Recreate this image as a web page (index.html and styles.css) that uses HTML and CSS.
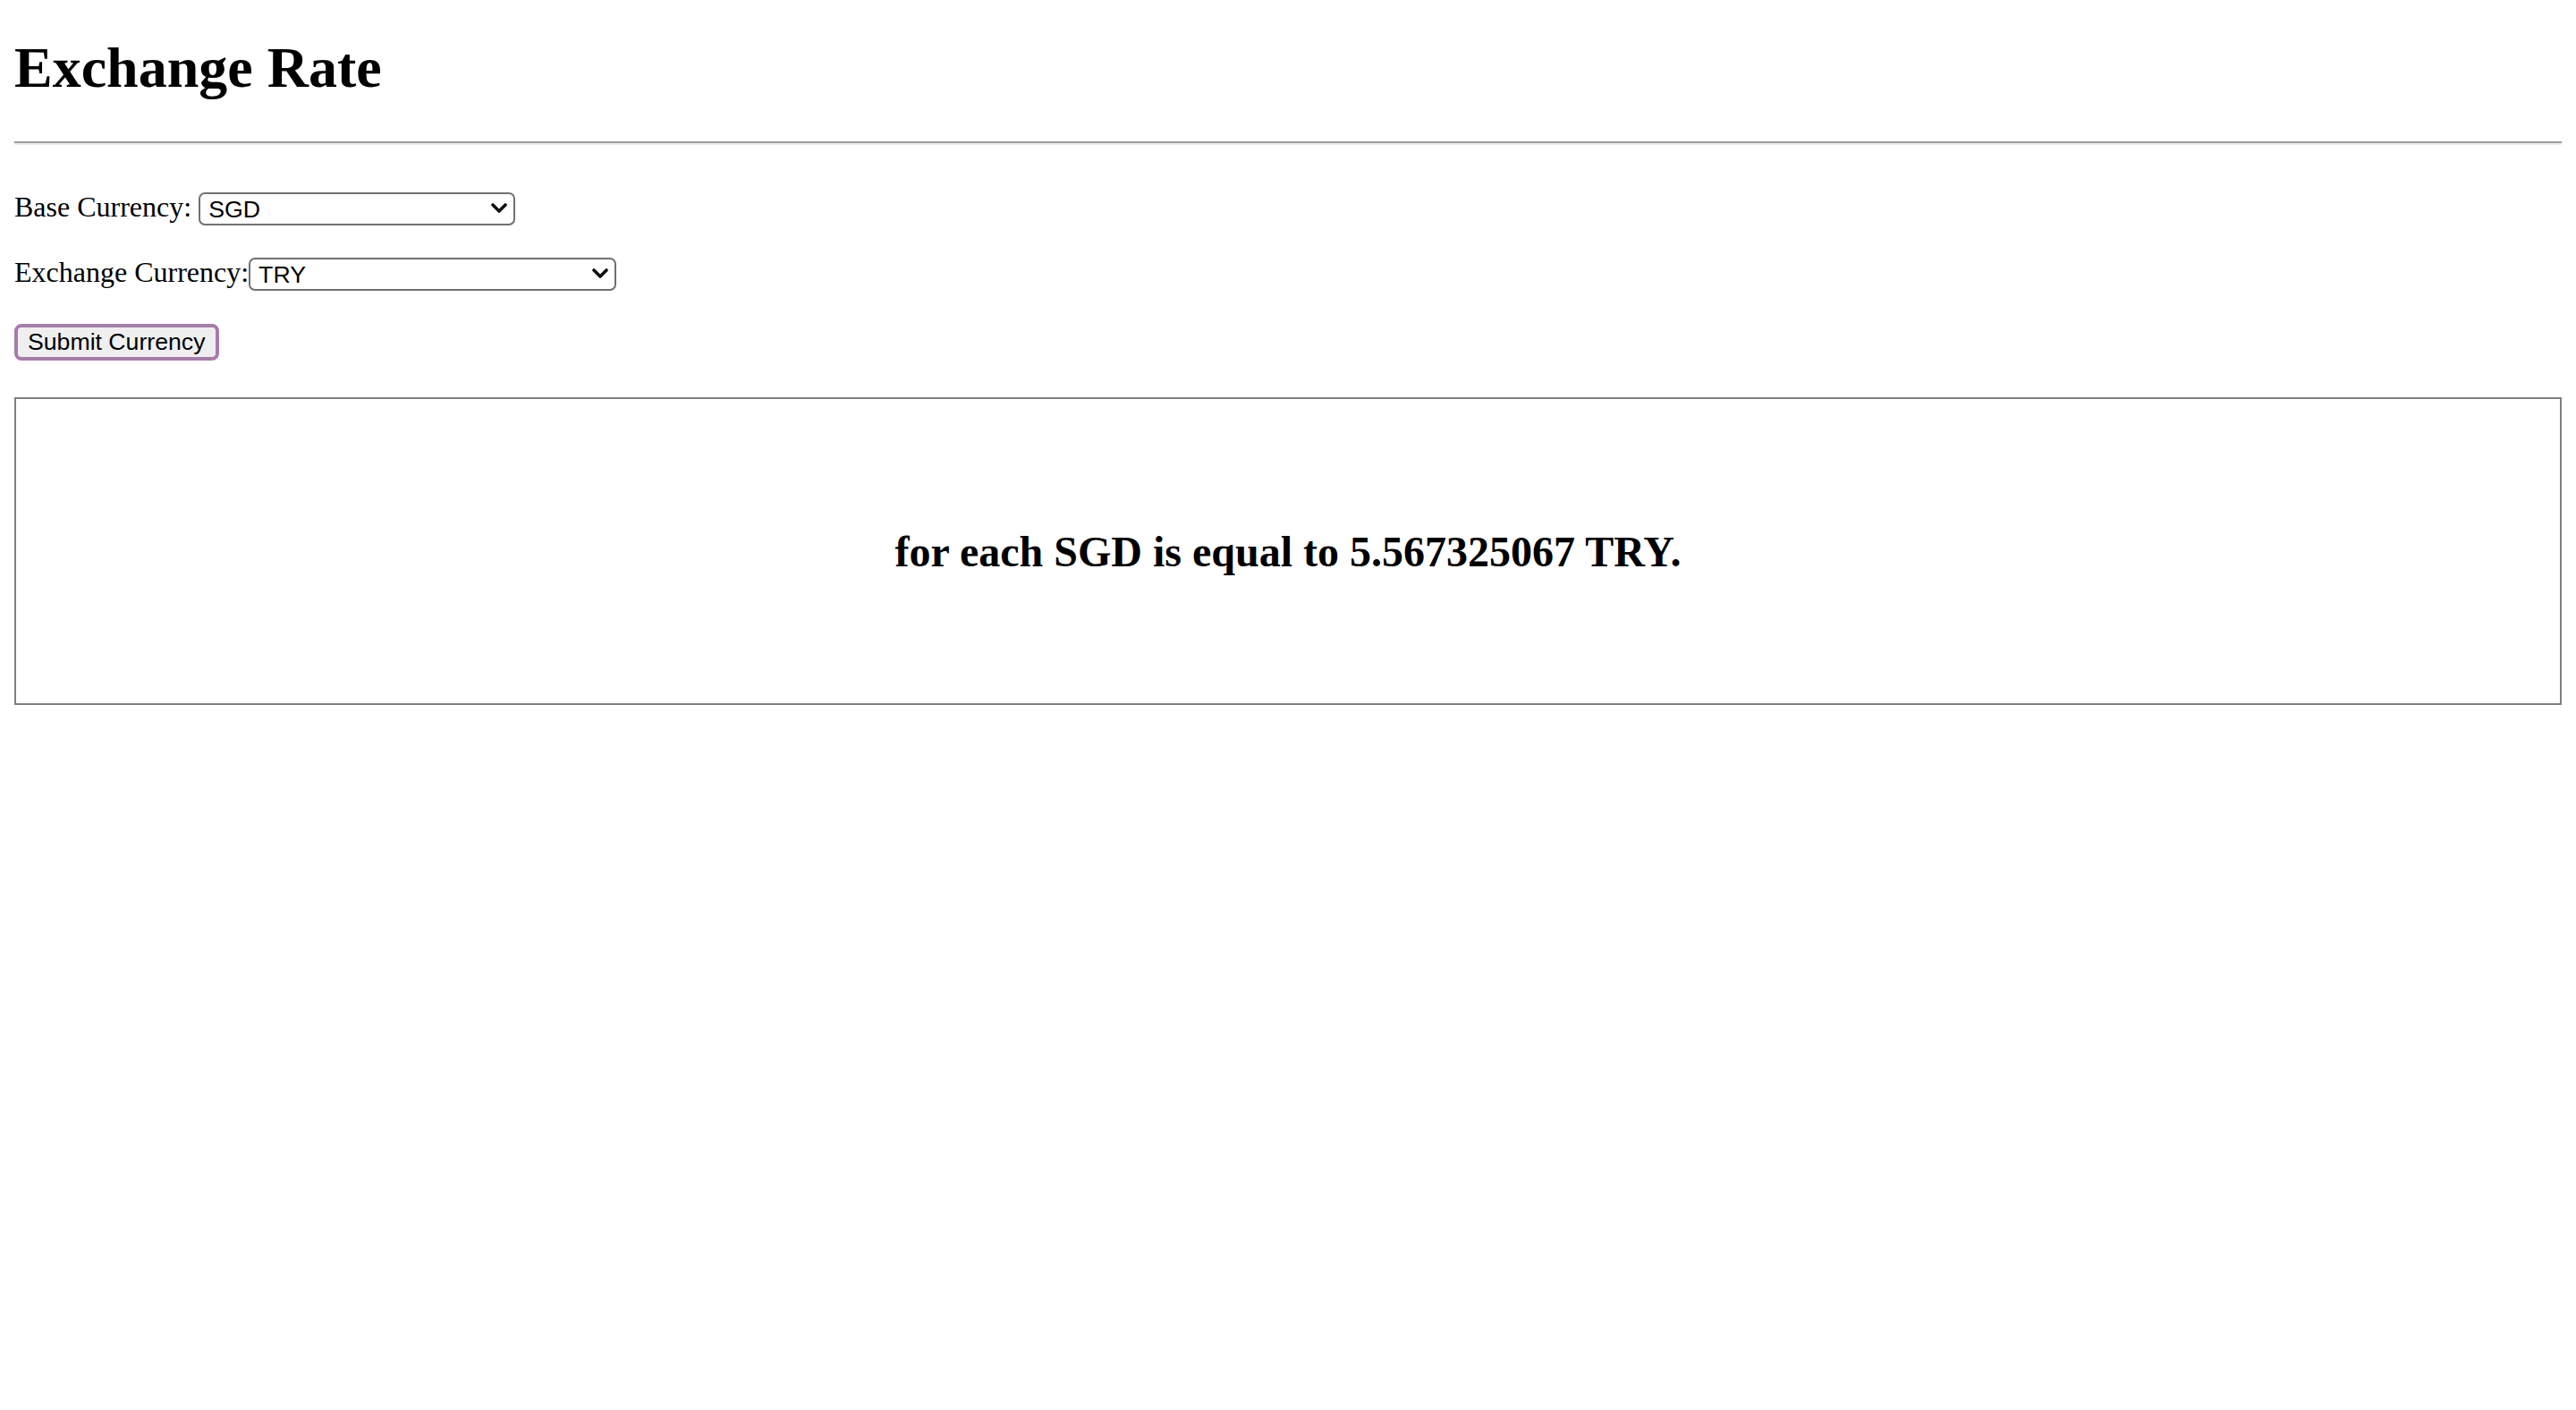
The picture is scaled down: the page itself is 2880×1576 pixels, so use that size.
FILE: index.html
```html
<!DOCTYPE html>
<html lang="en">
<head>
<meta charset="utf-8">
<title>Exchange Rate</title>
<link rel="stylesheet" href="styles.css">
</head>
<body>
<div class="page">
  <h1 class="title">Exchange Rate</h1>
  <hr class="rule">
  <form class="form">
    <div class="row">
      <label class="label label-base" for="base">Base Currency:</label>
      <span class="select-wrap">
        <select id="base" class="select select-base">
          <option>SGD</option>
        </select>
        <svg class="chevron" width="18" height="11" viewBox="0 0 18 11"><path d="M2 2 L9 9 L16 2" fill="none" stroke="#111" stroke-width="3.6" stroke-linecap="round" stroke-linejoin="round"/></svg>
      </span>
    </div>
    <div class="row row-second">
      <label class="label" for="exch">Exchange Currency:</label>
      <span class="select-wrap">
        <select id="exch" class="select select-exch">
          <option>TRY</option>
        </select>
        <svg class="chevron" width="18" height="11" viewBox="0 0 18 11"><path d="M2 2 L9 9 L16 2" fill="none" stroke="#111" stroke-width="3.6" stroke-linecap="round" stroke-linejoin="round"/></svg>
      </span>
    </div>
    <button type="button" class="submit">Submit Currency</button>
  </form>
  <div class="result">
    <h2 class="result-text">for each SGD is equal to 5.567325067 TRY.</h2>
  </div>
</div>
</body>
</html>
```
FILE: styles.css
```css
html, body {
  margin: 0;
  padding: 0;
  background: #ffffff;
}
body {
  font-family: "Liberation Serif", "Times New Roman", serif;
  font-size: 32px;
  color: #000;
}
.page {
  padding: 0 16px;
}
.title {
  margin: 39px 0 0;
  font-size: 64px;
  line-height: 74px;
  font-weight: bold;
}
.rule {
  margin: 45px 0 0;
  height: 0;
  border: none;
  border-top: 2px solid #9a9a9a;
  border-bottom: 2px solid #eeeeee;
}
.form {
  margin: 0;
}
.row {
  display: flex;
  align-items: center;
  height: 37px;
  margin-top: 53px;
}
.row-second {
  margin-top: 36px;
}
.label {
  line-height: 37px;
  margin-bottom: 4px;
}
.label-base {
  margin-right: 8px;
}
.select-wrap {
  position: relative;
  display: inline-flex;
}
.select {
  -webkit-appearance: none;
  appearance: none;
  box-sizing: border-box;
  height: 37px;
  border: 2px solid #707070;
  border-radius: 7px;
  background: #ffffff;
  color: #000;
  font-family: "Liberation Sans", Arial, sans-serif;
  font-size: 26.67px;
  padding: 0 0 0 9px;
  margin: 0;
}
.select-base {
  width: 354px;
}
.select-exch {
  width: 411px;
}
.chevron {
  position: absolute;
  right: 9px;
  top: 12px;
  pointer-events: none;
}
.submit {
  display: block;
  box-sizing: border-box;
  margin: 37px 0 0;
  height: 41px;
  padding: 0 11px;
  border: 4px solid #a77bab;
  border-radius: 8px;
  background: #efefef;
  color: #000;
  font-family: "Liberation Sans", Arial, sans-serif;
  font-size: 26.67px;
  line-height: 1;
}
.result {
  margin-top: 41px;
  box-sizing: border-box;
  height: 344px;
  border: 2px solid #808080;
  display: flex;
  align-items: center;
  justify-content: center;
}
.result-text {
  margin: 0;
  font-size: 48px;
  line-height: 55px;
  font-weight: bold;
  text-align: center;
}
```
